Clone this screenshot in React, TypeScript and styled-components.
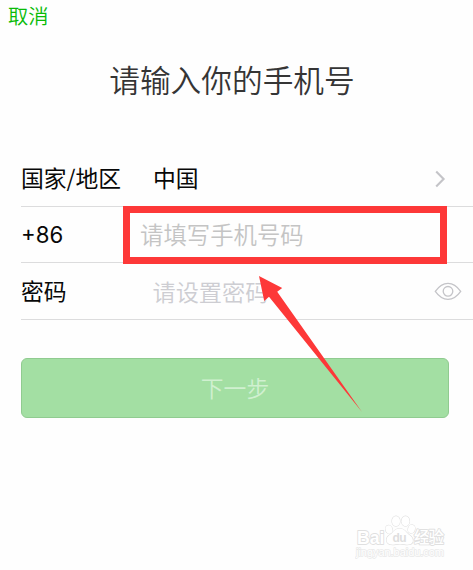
import React from "react";
import styled, { createGlobalStyle } from "styled-components";

const GlobalStyle = createGlobalStyle`
  * { box-sizing: border-box; }
  body {
    margin: 0;
    background: #fefefe;
    font-family: "Liberation Sans", "Noto Sans CJK SC", sans-serif;
  }
`;

const Screen = styled.main`
  position: relative;
  width: 473px;
  height: 570px;
  overflow: hidden;
  background: #fefefe;
  display: flex;
  flex-direction: column;
`;

const NavBar = styled.header`
  height: 30px;
  padding-left: 8px;
  display: flex;
  align-items: flex-start;
`;

const CancelButton = styled.button`
  border: 0;
  padding: 0;
  background: none;
  color: #09bb07;
  font: 350 20.3px/30px "Noto Sans CJK SC", sans-serif;
`;

const Title = styled.h1`
  margin: 24px 0 0;
  padding-right: 9px;
  height: 50px;
  text-align: center;
  color: #353535;
  font: 350 30.7px/50px "Noto Sans CJK SC", sans-serif;
`;

const Form = styled.form`
  margin: 46px 0 0 21px;
`;

const Row = styled.div<{ $height: number }>`
  position: relative;
  height: ${(p) => p.$height}px;
  display: flex;
  align-items: center;
  border-bottom: 1px solid #dcdcdd;
  font-size: 23px;
`;

const Label = styled.span<{ $width: number }>`
  width: ${(p) => p.$width}px;
  padding-bottom: 1px;
  color: #080808;
  font-family: "Noto Sans CJK SC", sans-serif;
  font-size: 22.8px;
  font-weight: 400;
  line-height: 34px;
  white-space: nowrap;
`;

const DialCode = styled(Label)`
  padding: 0;
  font-family: Inter, sans-serif;
  font-size: 22.2px;
`;

const Value = styled.span<{ $color: string; $size?: number; $weight?: number }>`
  flex: 1;
  padding-bottom: 1px;
  color: ${(p) => p.$color};
  font: ${(p) => p.$weight ?? 350} ${(p) => p.$size ?? 22.8}px/34px "Noto Sans CJK SC", sans-serif;
`;

const RowIcon = styled.svg<{ $right: number }>`
  flex: none;
  margin-right: ${(p) => p.$right}px;
  fill: none;
  stroke: #c4c4c8;
`;

const Highlight = styled.div`
  position: absolute;
  left: 102px;
  top: -1px;
  width: 324px;
  height: 58px;
  border: 7px solid #fd3838;
`;

const NextButton = styled.button`
  display: block;
  width: 428px;
  height: 60px;
  margin: 38px 0 0;
  padding: 0;
  border: 1px solid #90cb90;
  border-radius: 6px;
  background: #a3dfa3;
  color: #d0f0d0;
  font: 350 22.8px/56px "Noto Sans CJK SC", sans-serif;
`;

const Arrow = styled.svg`
  position: absolute;
  left: 250px;
  top: 270px;
  fill: #fd3838;
`;

const Watermark = styled.div`
  position: absolute;
  left: 355px;
  top: 514px;
  width: 92px;
  height: 46px;
`;

const WatermarkArt = styled.svg`
  display: block;
  fill: #fff;
  stroke: #e0e0e0;
  stroke-width: 1.8;
  stroke-linejoin: round;
  font-family: "Liberation Sans", "Noto Sans CJK SC", sans-serif;
  paint-order: stroke;
`;

export default function App() {
  return (
    <>
      <GlobalStyle />
      <Screen>
        <NavBar>
          <CancelButton type="button">取消</CancelButton>
        </NavBar>
        <Title>请输入你的手机号</Title>
        <Form>
          <Row $height={57}>
            <Label $width={132}>国家/地区</Label>
            <Value $color="#080808" $weight={400}>中国</Value>
            <RowIcon $right={26} width="13" height="20" viewBox="0 0 13 20" strokeWidth="2.1">
              <path d="M2.2 3.6 9.6 11 2.2 18.4" />
            </RowIcon>
          </Row>
          <Row $height={56}>
            <DialCode $width={119}>+86</DialCode>
            <Value $color="#c4c4c4" $size={23.4}>请填写手机号码</Value>
            <Highlight />
          </Row>
          <Row $height={57}>
            <Label $width={131.5}>密码</Label>
            <Value $color="#cdcdd2" $size={23.2}>请设置密码</Value>
            <RowIcon $right={11} width="28" height="20" viewBox="0 0 28 20" strokeWidth="1.3">
              <path d="M1.3 10.3Q7 2.3 14 2.3T26.7 10.3Q21 18.3 14 18.3T1.3 10.3Z" />
              <circle cx="14" cy="10.3" r="4.8" />
            </RowIcon>
          </Row>
          <NextButton type="button">下一步</NextButton>
        </Form>
        <Arrow width="120" height="146" viewBox="250 270 120 146">
          <path d="M259 276 282.2 288 277.2 291.7 362 412 269 296.7 264.2 301Z" />
        </Arrow>
        <Watermark>
          <WatermarkArt width="92" height="46" viewBox="0 0 92 46">
            <path strokeWidth="1.2" d="M44.5 14.5C39.5 14.5 38 19 34 21.5C30 24.5 31 30 36 30.5C39 31 41 30 45 30C49 30 51 31 54 30.5C59 30 59 24.5 55 21.5C51 19 50 14.5 44.5 14.5Z" />
            <ellipse strokeWidth="1.2" cx="34" cy="15.5" rx="3.4" ry="4.2" transform="rotate(-18 34 15.5)" />
            <ellipse strokeWidth="1.2" cx="41" cy="7.2" rx="4" ry="5" />
            <ellipse strokeWidth="1.2" cx="50.5" cy="7.2" rx="4" ry="5" />
            <ellipse strokeWidth="1.2" cx="56.5" cy="15" rx="3.4" ry="4.2" transform="rotate(18 56.5 15)" />
            <text x="2" y="29.5" fontSize="19" fontWeight="700" textLength="27.5" lengthAdjust="spacingAndGlyphs">Bai</text>
            <text x="37.5" y="28" fontSize="12" fontWeight="700" textLength="14" fill="#dedede" stroke="none">du</text>
            <text x="59" y="28.5" fontSize="15.5" fontWeight="500" textLength="30">经验</text>
            <text x="1" y="42" fontSize="11" stroke="#e9e9e9" strokeWidth="1.4" textLength="88">jingyan.baidu.com</text>
          </WatermarkArt>
        </Watermark>
      </Screen>
    </>
  );
}
